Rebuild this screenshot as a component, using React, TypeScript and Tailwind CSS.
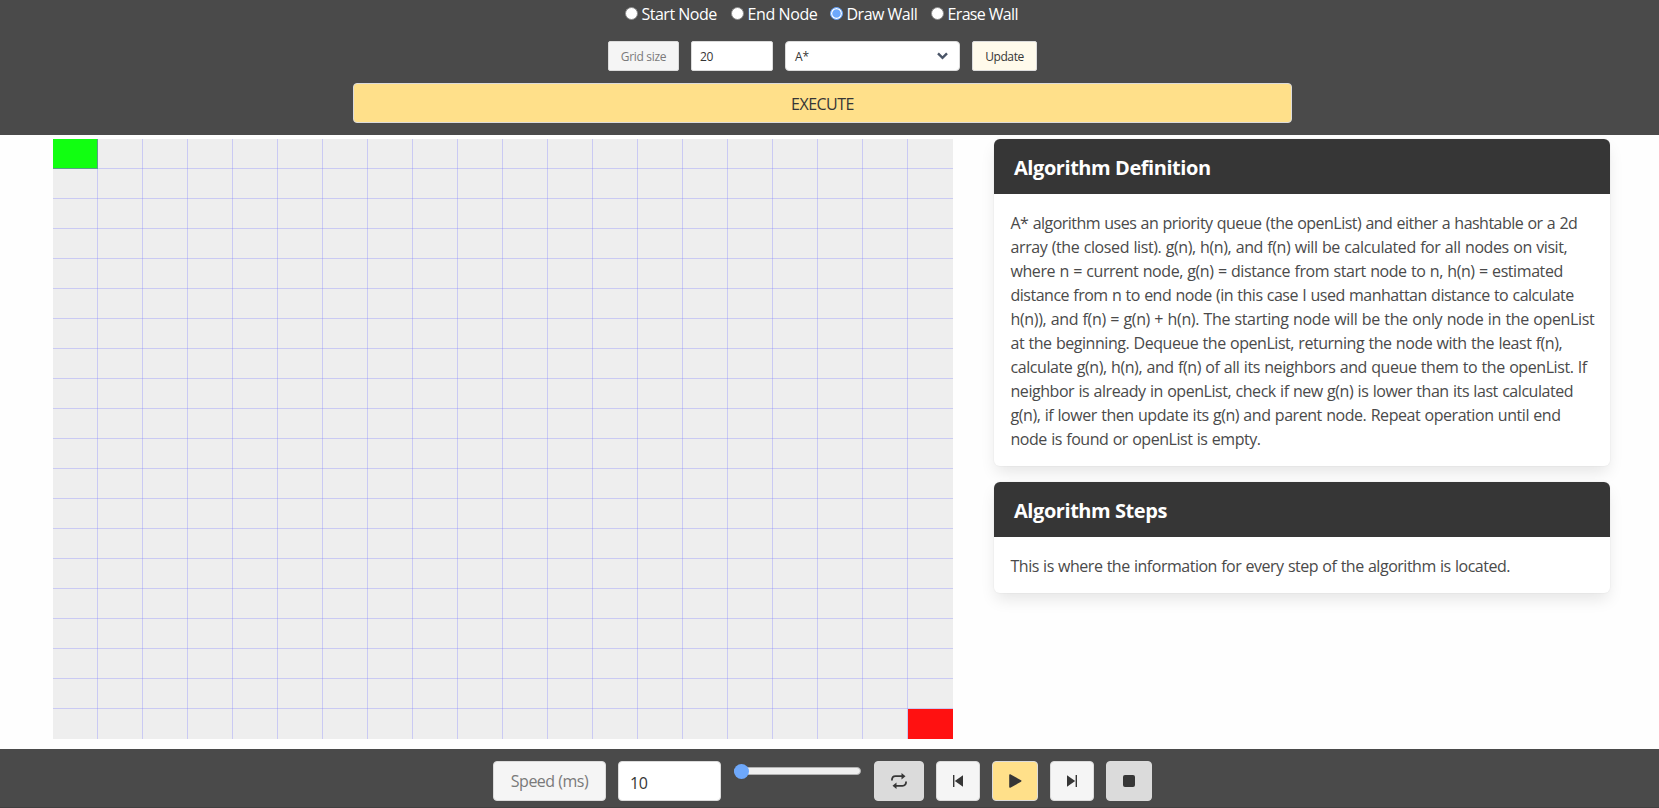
import { useState } from "react";

const MODES = [
  { name: "Start Node", label: "w-[106px]", text: "tracking-[-0.5px]" },
  { name: "End Node", label: "w-[99px]", text: "tracking-[-0.4px]" },
  { name: "Draw Wall", label: "w-[101px]", text: "tracking-[-0.5px]" },
  { name: "Erase Wall", label: "w-[90px]", text: "tracking-[-0.65px]" },
];

const DEFINITION = [
  { text: "A* algorithm uses an priority queue (the openList) and either a hashtable or a 2d", track: "tracking-[-0.52px]" },
  { text: "array (the closed list). g(n), h(n), and f(n) will be calculated for all nodes on visit,", track: "tracking-[-0.4px]" },
  { text: "where n = current node, g(n) = distance from start node to n, h(n) = estimated", track: "tracking-[-0.42px]" },
  { text: "distance from n to end node (in this case I used manhattan distance to calculate", track: "tracking-[-0.495px]" },
  { text: "h(n)), and f(n) = g(n) + h(n). The starting node will be the only node in the openList", track: "tracking-[-0.35px]" },
  { text: "at the beginning. Dequeue the openList, returning the node with the least f(n),", track: "tracking-[-0.456px]" },
  { text: "calculate g(n), h(n), and f(n) of all its neighbors and queue them to the openList. If", track: "tracking-[-0.423px]" },
  { text: "neighbor is already in openList, check if new g(n) is lower than its last calculated", track: "tracking-[-0.448px]" },
  { text: "g(n), if lower then update its g(n) and parent node. Repeat operation until end", track: "tracking-[-0.447px]" },
  { text: "node is found or openList is empty.", track: "tracking-[-0.46px]" },
];

const STEPS = [
  { text: "This is where the information for every step of the algorithm is located.", track: "tracking-[-0.485px]" },
];

function Card({ title, lines }: { title: string; lines: { text: string; track: string }[] }) {
  return (
    <section className="rounded-md bg-white shadow-[0_8px_16px_-2px_rgba(10,10,10,0.1),0_0_0_1px_rgba(10,10,10,0.02)]">
      <h2 className="flex h-[55px] items-center rounded-t-md bg-[#363636] pl-[20px] pt-[3px] text-[20px] font-bold tracking-[-0.44px] text-white">
        {title}
      </h2>
      <div className="px-[16.5px] pb-[15px] pt-[17px] text-base/6 text-[#4a4a4a] [word-spacing:0.6px]">
        {lines.map((l) => (
          <p key={l.text} className="h-6 whitespace-nowrap">
            <span className={l.track}>{l.text}</span>
          </p>
        ))}
      </div>
    </section>
  );
}

function Grid() {
  const cols = Array.from({ length: 19 }, (_, i) => i * 45 + 44);
  const rows = Array.from({ length: 19 }, (_, i) => i * 30 + 29);
  return (
    <svg width="900" height="600" viewBox="0 0 900 600" className="block shrink-0 bg-[#eeeeee]" shapeRendering="crispEdges">
      <rect width="45" height="30" fill="#11ff11" />
      <rect x="855" y="570" width="45" height="30" fill="#ff1111" />
      {cols.map((x) => (
        <rect key={x} x={x} width="1" height="600" fill="#7777ff" fillOpacity="0.3" />
      ))}
      {rows.map((y) => (
        <rect key={y} y={y} width="900" height="1" fill="#7777ff" fillOpacity="0.3" />
      ))}
      <path d="M44 0h1v29h-1zM0 29h44v1H0z" fill="#5c9c8c" />
    </svg>
  );
}

export default function App() {
  const [mode, setMode] = useState("Draw Wall");
  return (
    <div className="flex h-[808px] w-[1659px] flex-col overflow-hidden bg-[#fefefe] font-['Open_Sans','Noto_Sans',sans-serif] text-[#363636]">
      <header className="flex h-[135px] flex-col items-center bg-[#4a4a4a] pr-[14px]">
        <div className="flex h-[27px] w-[396px] items-center text-white">
          {MODES.map((m) => (
            <label key={m.name} className={`flex shrink-0 items-center gap-1 whitespace-nowrap ${m.label}`}>
              <input type="radio" name="mode" checked={mode === m.name} onChange={() => setMode(m.name)} className="sr-only" />
              <span
                className={
                  mode === m.name
                    ? "mb-px size-[13px] shrink-0 rounded-full border border-[#6ea8fb] bg-[#6ea8fb] shadow-[inset_0_0_0_1.2px_#ffffff]"
                    : "mb-px size-[13px] shrink-0 rounded-full border border-[#8a8a8a] bg-white"
                }
              />
              <span className={m.text}>{m.name}</span>
            </label>
          ))}
        </div>
        <div className="mt-[14px] flex h-[30px] w-[429px] gap-3 text-xs">
          <button className="w-[71px] shrink-0 rounded-[2px] border border-[#dbdbdb] bg-[#f5f5f5] pt-0.5 tracking-[-0.3px] text-[#7a7a7a]">Grid size</button>
          <div className="flex w-[82px] shrink-0 items-center rounded-[2px] border border-[#dbdbdb] bg-white pl-2 pt-0.5 tracking-[-0.3px]">20</div>
          <div className="flex w-[175px] shrink-0 items-center justify-between rounded border border-[#dbdbdb] bg-white pl-[9px] pr-[11px]">
            <span className="pt-0.5">A*</span>
            <svg width="11" height="8" viewBox="0 0 11 8" fill="none" stroke="#4a5568" strokeWidth="2.4">
              <path d="M1 1.3l4.5 4.5L10 1.3" />
            </svg>
          </div>
          <button className="w-[65px] shrink-0 rounded-[2px] border border-[#dbdbdb] bg-[#fffaeb] pt-0.5 tracking-[-0.4px]">Update</button>
        </div>
        <button className="mt-3 h-10 w-[939px] rounded border border-[#dbdbdb] bg-[#ffe08a] pt-0.5 text-base tracking-[-0.5px]">EXECUTE</button>
      </header>

      <main className="flex h-[614px] gap-[41px] pl-[53px] pt-1">
        <Grid />
        <div className="flex w-[616px] flex-col gap-4">
          <Card title="Algorithm Definition" lines={DEFINITION} />
          <Card title="Algorithm Steps" lines={STEPS} />
        </div>
      </main>

      <footer className="flex h-[59px] gap-3 border-b border-[#404040] bg-[#4a4a4a] pl-[493px] pt-3">
        <button className="h-10 w-[113px] shrink-0 rounded border border-[#dbdbdb] bg-[#f5f5f5] text-base tracking-[-0.5px] text-[#7a7a7a]">Speed (ms)</button>
        <div className="flex h-10 w-[103px] shrink-0 items-center rounded border border-[#dbdbdb] bg-white pl-[11px] pt-[3px] tracking-[-0.4px]">10</div>
        <div className="ml-px mr-px mt-[6px] flex h-2 w-[127px] shrink-0 items-center rounded-full border border-[#b2b2b2] bg-[#efefef]">
          <span className="-ml-px size-[15px] shrink-0 rounded-full bg-[#6ea8fb]" />
        </div>
        <button aria-label="Loop" className="flex h-10 w-[50px] shrink-0 items-center justify-center rounded border border-[#dbdbdb] bg-[#dbdbdb]">
          <svg width="16" height="16" viewBox="0 0 16 16" fill="#363636">
            <path d="M10.500 0 14.500 3.200 10.500 6.400zM5.500 9.600 1.500 12.800 5.500 16z" />
            <path d="M.9 7.500C.9 4.500 2.200 3.200 4.500 3.200H12M15.100 8.500c0 3-1.300 4.300-3.600 4.300H4" fill="none" stroke="#363636" strokeWidth="1.800" />
          </svg>
        </button>
        <button aria-label="Previous" className="flex h-10 w-11 shrink-0 items-center justify-center rounded border border-[#dbdbdb] bg-[#f5f5f5]">
          <svg width="10" height="12" viewBox="0 0 10 12" fill="#363636">
            <path d="M0 0h1.400v12H0zM10 .3v11.400L1.800 6z" />
          </svg>
        </button>
        <button aria-label="Play" className="flex h-10 w-[46px] shrink-0 items-center justify-center rounded border border-[#dbdbdb] bg-[#ffe08a]">
          <svg width="13" height="14" viewBox="0 0 13 14" fill="#363636">
            <path d="M1.300.2 12 6.300q1 .7 0 1.400L1.300 13.800Q.2 14 .2 13V1Q.2 0 1.300.2z" />
          </svg>
        </button>
        <button aria-label="Next" className="flex h-10 w-11 shrink-0 items-center justify-center rounded border border-[#dbdbdb] bg-[#f5f5f5]">
          <svg width="10" height="12" viewBox="0 0 10 12" fill="#363636">
            <path d="M8.600 0H10v12H8.600zM0 .3l8.200 5.700L0 11.700z" />
          </svg>
        </button>
        <button aria-label="Stop" className="flex h-10 w-[46px] shrink-0 items-center justify-center rounded border border-[#dbdbdb] bg-[#dbdbdb]">
          <span className="size-3 rounded-[2px] bg-[#363636]" />
        </button>
      </footer>
    </div>
  );
}
